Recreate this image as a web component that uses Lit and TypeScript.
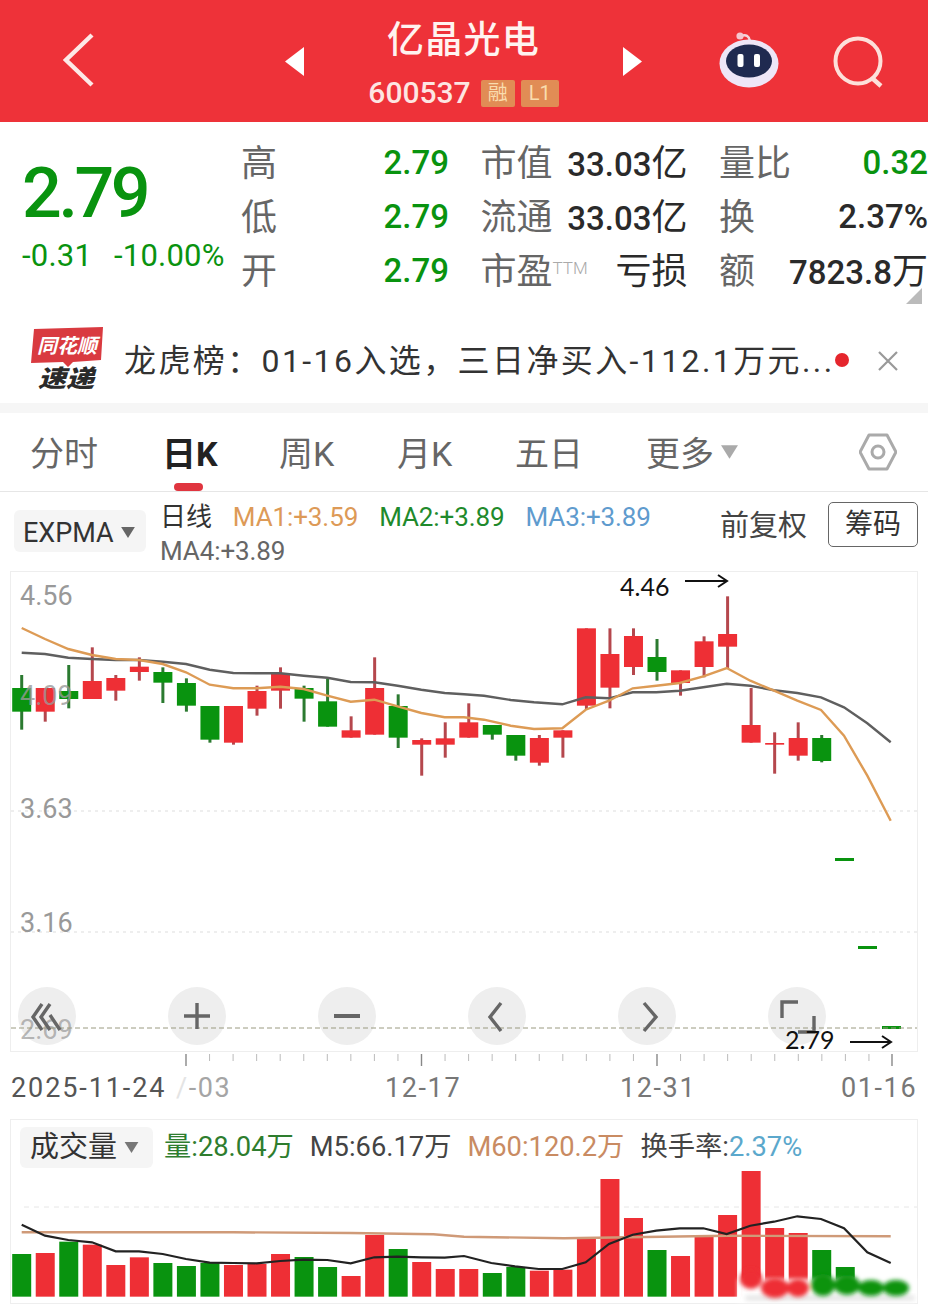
import { LitElement, html, svg, css } from "lit";
import { customElement } from "lit/decorators.js";

const RED = "#ee2f35";
const GREEN = "#09930f";
const slot = (i: number) => 21.7 + 23.53 * i;
const cy = (v: number) => 570 + v / 3;
const vy = (v: number) => 1110 + v / 3;

// [up, wickTop, wickBottom, bodyTop, bodyBottom] measured in 3x crop units
const candles: [number, number, number, number, number][] = [
  [0, 318, 482, 357, 428], [1, 357, 458, 357, 428], [0, 288, 418, 366, 390], [1, 235, 390, 336, 390],
  [1, 318, 395, 327, 365], [1, 265, 335, 293, 309], [0, 295, 402, 309, 341], [0, 328, 428, 342, 410],
  [0, 411, 521, 411, 512], [1, 411, 527, 411, 521], [1, 350, 440, 366, 419], [1, 295, 419, 312, 365],
  [0, 350, 458, 357, 389], [0, 330, 473, 397, 473], [1, 442, 506, 484, 506], [1, 265, 497, 357, 497],
  [0, 376, 537, 411, 506], [1, 508, 620, 513, 527], [1, 460, 566, 508, 527], [1, 403, 506, 460, 506],
  [0, 468, 512, 468, 497], [0, 498, 575, 498, 560], [1, 498, 590, 507, 581], [1, 484, 566, 484, 506],
  [1, 178, 420, 178, 410], [1, 178, 418, 255, 356], [1, 178, 318, 201, 294], [0, 210, 335, 264, 309],
  [1, 304, 380, 304, 342], [1, 202, 325, 217, 294], [1, 82, 300, 195, 233], [1, 357, 521, 468, 521],
  [1, 490, 614, 522, 527], [1, 460, 575, 507, 560], [0, 498, 580, 507, 576],
];

const maOrange: [number, number][] = [
  [65,177],[135,210],[205,240],[276,258],[347,270],[417,273],[488,285],[558,310],[629,347],[700,358],[770,358],[841,353],[911,360],[982,380],[1052,398],[1123,392],[1193,412],[1264,432],[1334,445],
  [1392,445],[1452,452],[1532,470],[1602,480],[1687,478],[1757,422],[1827,395],[1898,358],[1969,350],[2039,342],[2110,322],[2180,297],[2251,335],[2322,365],[2392,395],[2463,423],[2532,500],[2602,620],[2672,755],
];
const maGray: [number, number][] = [
  [65,251],[135,255],[205,266],[276,270],[347,273],[417,273],[488,278],[558,285],[629,302],[700,312],[770,313],[841,313],[911,320],[982,326],[1052,339],[1123,340],[1193,350],[1264,362],[1334,372],
  [1392,376],[1452,380],[1532,393],[1602,400],[1687,406],[1757,385],[1827,388],[1898,370],[1969,370],[2039,365],[2110,355],[2180,344],[2251,350],[2322,364],[2392,372],[2463,385],[2532,415],[2602,463],[2672,520],
];
const volBlack: [number, number][] = [
  [65,347],[135,380],[205,393],[276,400],[347,427],[417,427],[488,435],[558,450],[629,461],[700,462],[770,463],[841,456],[911,452],[982,453],[1052,463],[1123,445],[1193,443],[1264,445],[1334,446],
  [1392,441],[1474,462],[1545,472],[1616,480],[1687,480],[1757,460],[1827,405],[1898,377],[1969,365],[2039,358],[2110,358],[2180,375],[2251,350],[2322,338],[2392,322],[2463,330],[2532,358],[2602,430],[2672,462],
];
const volOrange: [number, number][] = [
  [65,370],[700,370],[1052,372],[1300,376],[1392,383],[1692,388],[2180,380],[2672,382],
];
// [up, top] for the volume bars, in 3x crop units
const bars: [number, number][] = [
  [0,435],[1,432],[0,398],[1,407],[1,468],[1,445],[0,462],[0,471],[0,462],[1,468],[1,465],[1,435],[0,444],[0,474],[1,501],[1,378],[0,420],[1,459],[1,480],
  [1,480],[0,492],[0,474],[1,485],[1,482],[1,385],[1,210],[1,327],[0,423],[1,441],[1,382],[1,318],[1,186],[1,357],[1,372],[0,423],[0,474],
];
const pts = (list: [number, number][], f: (v: number) => number) =>
  list.map(([x, y]) => `${(x / 3).toFixed(1)},${f(y).toFixed(1)}`).join(" ");

const btnX = [47, 197, 347, 497, 647, 797];

@customElement("app-root")
export class AppRoot extends LitElement {
  static styles = css`
    :host { display: block; width: 928px; height: 1312px; overflow: hidden; background: #fff;
      font-family: Roboto, "Noto Sans CJK SC", sans-serif; color: #333; }
    .header { height: 122px; background: #ee3239; display: grid; grid-template-columns: 285px 357px 286px; color: #fff; }
    .back { padding: 33px 0 0 63px; }
    .mid { display: flex; justify-content: space-between; align-items: center; }
    .title { display: flex; flex-direction: column; align-items: center; align-self: flex-start; }
    .name { font-size: 37px; line-height: 44px; margin-top: 19px; letter-spacing: 1.3px; color: #fff3f0; font-weight: 500; }
    .code { display: flex; align-items: center; gap: 6px; margin-top: 15px; font-size: 30px; line-height: 30px; color: #fde6e2; font-weight: 500; }
    .code span.num { margin-right: 4px; }
    .badge { background: #e18c55; color: #f9dcae; font-size: 20px; font-weight: 400; height: 27px; line-height: 27px; width: 34px; text-align: center; border-radius: 2px; }
    .badge.w { width: 38px; }
    .tri { margin-top: 1px; display: block; }
    .tools { display: flex; gap: 53px; padding: 30px 0 0 76px; align-items: flex-start; }
    .search { margin-top: 4px; }
    .stats { height: 197px; padding-top: 13px; box-sizing: border-box; display: flex; position: relative; }
    .price { width: 241px; padding-left: 22px; box-sizing: border-box; color: ${css([GREEN] as any)}; flex: none; }
    .big { font-size: 70px; line-height: 78px; font-weight: 500; letter-spacing: -3.4px; margin-top: 19px; }
    .chg { display: flex; gap: 22px; font-size: 31px; line-height: 32px; margin-top: 8px; letter-spacing: 0.2px; white-space: nowrap; }
    .grid { display: grid; grid-template-columns: 208px 207px 209px; column-gap: 31.5px; grid-auto-rows: 54px; flex: none; margin-top: -2px; }
    .cell { display: flex; justify-content: space-between; align-items: center; font-size: 36px; color: #666; white-space: nowrap; }
    .cell b { font-weight: 500; color: #2a2a2a; font-size: 33px; margin-top: 4px; }
    .cell b.n { margin-top: 0; }
    .cell b i { font-style: normal; font-size: 36px; font-weight: 400; }
    .cell b.g { color: ${css([GREEN] as any)}; }
    .cell sup { font-size: 17px; color: #aaa; vertical-align: 10px; line-height: 0; font-weight: 300; }
    .corner { position: absolute; right: 6px; bottom: 15px; width: 0; height: 0; border-left: 16px solid transparent; border-bottom: 16px solid #bbb; }
    .banner { height: 84px; display: flex; align-items: center; padding-left: 30px; }
    .logo { width: 74px; height: 66px; flex: none; margin-top: -2px; }
    .logo svg { display: block; }
    .logo-a { font-size: 20px; font-weight: 700; font-style: italic; fill: #fff; }
    .logo-b { font-size: 24px; font-weight: 900; font-style: italic; fill: #2a2a2a; }
    .news { font-size: 32px; color: #333; margin-left: 20px; white-space: nowrap; width: 711px; overflow: hidden; line-height: 44px; letter-spacing: 2.4px; flex: none; }
    .dot { width: 14px; height: 14px; background: #e5262d; border-radius: 50%; flex: none; margin-top: -3px; }
    .close { margin-left: 29px; display: block; flex: none; }
    .sep { height: 10px; background: #f6f6f6; }
    .tabs { height: 79px; padding-bottom: 1px; box-sizing: border-box; border-bottom: 1px solid #e6e6e6; display: flex; position: relative; align-items: center; padding-left: 30px; font-size: 34px; color: #666; }
    .tab { white-space: nowrap; }
    .tab.on { color: #222; font-weight: 700; }
    .t1 { width: 132px; } .t2 { width: 117px; } .t3 { width: 118px; } .t4 { width: 118px; } .t5 { width: 131px; }
    .t6 { display: flex; align-items: center; gap: 7px; width: 213px; }
    .underline { position: absolute; left: 174px; bottom: 0; width: 29px; height: 8px; background: #e0353f; border-radius: 4px; }
    .legend { height: 79px; position: relative; }
    .pill { position: absolute; left: 14px; top: 18px; width: 132px; height: 42px; box-sizing: border-box; background: #f5f5f5; border-radius: 6px; display: flex; align-items: center; gap: 7px; padding: 3px 0 0 9px; font-size: 27px; color: #333; }
    .lines { position: absolute; left: 160px; top: 8px; font-size: 26px; line-height: 34px; white-space: nowrap; }
    .lines span { margin-right: 21px; letter-spacing: -0.1px; }
    .fq { position: absolute; left: 720px; top: 16px; font-size: 29px; line-height: 36px; color: #444; }
    .chip { position: absolute; left: 828px; top: 10px; width: 90px; height: 45px; box-sizing: border-box; border: 1px solid #666; border-radius: 5px; text-align: center; line-height: 44px; font-size: 28px; color: #333; }
    .o { color: #dd9a57; } .g2 { color: #1f8a2c; } .b { color: #5f9bce; } .gr { color: #666; }
    .chart { margin-left: 10px; width: 908px; height: 481px; display: block; }
    .axis { font-size: 27px; fill: #999; }
    .note { font-size: 25px; fill: #111; font-family: Lato, sans-serif; }
    .xaxis { display: block; width: 928px; height: 67px; }
    .xlab { font-size: 27px; fill: #777; letter-spacing: 1.6px; }
    .xlab.d { fill: #555; letter-spacing: 1.9px; }
    .xlab.l { fill: #a5a5a5; }
    .slash { fill: #e4e4e4; }
    .vol { margin-left: 10px; width: 908px; height: 185px; border: 1px solid #eee; box-sizing: border-box; position: relative; }
    .plot { display: block; position: absolute; left: -1px; top: -1px; }
    .volhead { position: absolute; left: 9px; top: 7px; display: flex; align-items: center; font-size: 27.3px; line-height: 37px; white-space: nowrap; }
    .vpill { width: 133px; height: 41px; box-sizing: border-box; background: #f5f5f5; border-radius: 6px; display: flex; align-items: center; gap: 7px; padding-left: 10px; font-size: 29px; color: #333; margin-right: 11px; flex: none; }
    .volhead .v { margin-right: 16px; }
    .vg { color: #2e7d2e; } .vd { color: #444; } .vo { color: #c98b62; } .vb { color: #5ba8cc; }
    .caret { display: block; flex: none; }
  `;

  private caret(w: number, h: number, fill = "#777") {
    return html`<svg class="caret" width=${w} height=${h} viewBox="0 0 10 8"><path d="M0 0H10L5 8Z" fill=${fill}/></svg>`;
  }

  private chart() {
    return html`<svg class="chart" viewBox="10 572 908 481">
      <rect x="10.5" y="572.5" width="907" height="480" fill="#fff" stroke="#eee"/>
      <line x1="11" x2="917" y1="812" y2="812" stroke="#ddd" stroke-dasharray="3 4"/>
      <line x1="11" x2="917" y1="933" y2="933" stroke="#ddd" stroke-dasharray="3 4"/>
      ${candles.map(([up, wt, wb, bt, bb], i) => {
        const x = slot(i);
        return svg`<line x1=${x} x2=${x} y1=${cy(wt)} y2=${cy(wb)} stroke=${up ? "#b5474d" : "#2b7a30"} stroke-width="3"/>
          <rect x=${x - 9.5} y=${cy(bt)} width="19" height=${(bb - bt) / 3} fill=${up ? RED : GREEN}/>`;
      })}
      <polyline points=${pts(maGray, cy)} fill="none" stroke="#5f5f5f" stroke-width="2.4"/>
      <polyline points=${pts(maOrange, cy)} fill="none" stroke="#dd9b55" stroke-width="2.4"/>
      <rect x="835" y="859" width="19" height="3" fill=${GREEN}/>
      <rect x="858" y="947" width="19" height="3" fill=${GREEN}/>
      <rect x="882" y="1027" width="19" height="3" fill=${GREEN}/>
      <text class="axis" x="20" y="606">4.56</text>
      <text class="axis" x="20" y="706" fill-opacity="0.8">4.09</text>
      <text class="axis" x="20" y="819">3.63</text>
      <text class="axis" x="20" y="933">3.16</text>
      ${btnX.map((x) => svg`<circle cx=${x} cy="1017" r="29" fill="#eee"/>`)}
      <text class="axis" x="20" y="1040" fill-opacity="0.7">2.69</text>
      <line x1="11" x2="917" y1="1029" y2="1029" stroke="#9a9a80" stroke-dasharray="5 3"/>
      <g fill="none" stroke="#666" stroke-width="3.4">
        <path d="M42 1005L33 1018L42 1031M50 1005L41 1018L50 1031M60 1031L50 1016"/>
        <path d="M184 1017H210M197 1004V1030"/>
        <path d="M334 1017H360" stroke-width="4"/>
        <path d="M501 1004L490 1018L501 1032"/>
        <path d="M644 1004L656 1018L644 1032"/>
        <path d="M782 1019V1003H798M814 1017V1033H798"/>
      </g>
      <text class="note" x="620" y="597">4.46</text>
      <path d="M685 582H727M718 576L727 582L718 588" fill="none" stroke="#111" stroke-width="2"/>
      <text class="note" x="785" y="1050">2.79</text>
      <path d="M850 1043H891M882 1037L891 1043L882 1049" fill="none" stroke="#111" stroke-width="2"/>
    </svg>`;
  }

  private xaxis() {
    const ticks = Array.from({ length: 30 }, (_, i) => 186 + i * 23.55);
    return html`<svg class="xaxis" viewBox="0 1053 928 67">
      ${ticks.map((x, i) => svg`<line x1=${x} x2=${x} y1="1055" y2=${i % 10 === 0 ? 1067 : 1062} stroke=${i % 10 === 0 ? "#888" : "#bbb"} stroke-width=${i % 10 === 0 ? 1.4 : 1}/>`)}
      <line x1="892" x2="892" y1="1055" y2="1067" stroke="#888" stroke-width="1.4"/>
      <text class="xlab l" x="176" y="1098"><tspan class="slash">/</tspan>-03</text>
      <text class="xlab d" x="11" y="1098">2025-11-24</text>
      <text class="xlab" x="385" y="1098">12-17</text>
      <text class="xlab" x="620" y="1098">12-31</text>
      <text class="xlab" x="841" y="1098">01-16</text>
    </svg>`;
  }

  private volume() {
    const blobsR = [[751, 1280, 11, 10], [775, 1289, 14, 10], [798, 1289, 11, 9]];
    const blobsG = [[823, 1286, 12, 11], [847, 1286, 13, 10], [871, 1289, 13, 8], [896, 1289, 13, 8]];
    return html`<div class="vol">
      <svg class="plot" width="908" height="185" viewBox="10 1120 908 185">
        <defs><filter id="blur" x="-30%" y="-30%" width="160%" height="160%"><feGaussianBlur stdDeviation="2"/></filter></defs>
        <line x1="24" x2="917" y1="1208" y2="1208" stroke="#e6e6e6" stroke-dasharray="5 5"/>
        ${bars.map(([up, t], i) => svg`<rect x=${slot(i) - 9.5} y=${vy(t)} width="19" height=${(563 - t) / 3} fill=${up ? RED : GREEN}/>`)}
        <polyline points=${pts(volOrange, vy)} fill="none" stroke="#cf9a78" stroke-width="2.4"/>
        <polyline points=${pts(volBlack, vy)} fill="none" stroke="#222" stroke-width="2.2"/>
        <rect x="738" y="1280" width="178" height="23" fill="#fff" filter="url(#blur)"/>
        <rect x="745" y="1296" width="170" height="6" rx="3" fill="#e8e8e8" filter="url(#blur)"/>
        <g filter="url(#blur)">
          ${blobsR.map(([x, y, rx, ry]) => svg`<ellipse cx=${x} cy=${y} rx=${rx} ry=${ry} fill=${RED}/>`)}
          ${blobsG.map(([x, y, rx, ry]) => svg`<ellipse cx=${x} cy=${y} rx=${rx} ry=${ry} fill=${GREEN}/>`)}
        </g>
      </svg>
      <div class="volhead">
        <div class="vpill">成交量${this.caret(15, 11)}</div>
        <span class="v vg">量:28.04万</span>
        <span class="v vd">M5:66.17万</span>
        <span class="v vo">M60:120.2万</span>
        <span class="vd">换手率:</span><span class="vb">2.37%</span>
      </div>
    </div>`;
  }

  render() {
    return html`
      <div class="header">
        <div class="back">
          <svg width="32" height="54" viewBox="0 0 32 54"><path d="M29 2L3 27L29 52" fill="none" stroke="#fde9e6" stroke-width="4.4"/></svg>
        </div>
        <div class="mid">
          <svg class="tri" width="19" height="29" viewBox="0 0 19 29"><path d="M19 0V29L0 14.5Z" fill="#fff"/></svg>
          <div class="title">
            <div class="name">亿晶光电</div>
            <div class="code"><span class="num">600537</span><span class="badge">融</span><span class="badge w">L1</span></div>
          </div>
          <svg class="tri" width="19" height="29" viewBox="0 0 19 29"><path d="M0 0V29L19 14.5Z" fill="#fff"/></svg>
        </div>
        <div class="tools">
          <svg width="62" height="60" viewBox="0 0 62 60">
            <path d="M23 6C28 4 31 6 32 11" fill="none" stroke="#f3d5dc" stroke-width="2.4"/>
            <circle cx="22" cy="6" r="3.6" fill="#f5c6cf"/>
            <ellipse cx="31" cy="33.5" rx="29.5" ry="24" fill="#eee6f7"/>
            <ellipse cx="31" cy="31" rx="23" ry="16.5" fill="#1f2a50"/>
            <rect x="19.5" y="24" width="6" height="13" rx="2" fill="#fff"/>
            <rect x="36" y="24" width="6" height="13" rx="2" fill="#fff"/>
          </svg>
          <svg class="search" width="52" height="58" viewBox="0 0 52 58">
            <circle cx="25" cy="27" r="22.5" fill="none" stroke="#fde0da" stroke-width="4"/>
            <path d="M39 44L48 52" stroke="#fde0da" stroke-width="4.4" fill="none"/>
          </svg>
        </div>
      </div>
      <div class="stats">
        <div class="price">
          <div class="big">2.79</div>
          <div class="chg"><span>-0.31</span><span>-10.00%</span></div>
        </div>
        <div class="grid">
          <div class="cell">高<b class="g">2.79</b></div>
          <div class="cell">市值<b class="n">33.03<i>亿</i></b></div>
          <div class="cell">量比<b class="g">0.32</b></div>
          <div class="cell">低<b class="g">2.79</b></div>
          <div class="cell">流通<b class="n">33.03<i>亿</i></b></div>
          <div class="cell">换<b>2.37%</b></div>
          <div class="cell">开<b class="g">2.79</b></div>
          <div class="cell"><span>市盈<sup>TTM</sup></span><b class="n"><i>亏损</i></b></div>
          <div class="cell">额<b class="n">7823.8<i>万</i></b></div>
        </div>
        <div class="corner"></div>
      </div>
      <div class="banner">
        <div class="logo">
          <svg width="74" height="66" viewBox="0 0 74 66">
            <path d="M4 2L73 0L71 33L43 35L38 40L33 35L1 36Z" fill="#d93a40"/>
            <text class="logo-a" x="7" y="26" textLength="60" lengthAdjust="spacingAndGlyphs">同花顺</text>
            <text class="logo-b" x="8" y="60" textLength="56" lengthAdjust="spacingAndGlyphs">速递</text>
          </svg>
        </div>
        <div class="news">龙虎榜：01-16入选，三日净买入-112.1万元...</div>
        <div class="dot"></div>
        <svg class="close" width="20" height="20" viewBox="0 0 20 20"><path d="M1 1L19 19M19 1L1 19" stroke="#999" stroke-width="2.2"/></svg>
      </div>
      <div class="sep"></div>
      <div class="tabs">
        <div class="tab t1">分时</div>
        <div class="tab t2 on">日K</div>
        <div class="tab t3">周K</div>
        <div class="tab t4">月K</div>
        <div class="tab t5">五日</div>
        <div class="tab t6">更多${this.caret(17, 14, "#aaa")}</div>
        <svg width="38" height="38" viewBox="0 0 38 38"><path d="M10 2H28L37 19L28 36H10L1 19Z" fill="none" stroke="#aaa" stroke-width="3" stroke-linejoin="round"/><circle cx="19" cy="19" r="6" fill="none" stroke="#aaa" stroke-width="3"/></svg>
        <div class="underline"></div>
      </div>
      <div class="legend">
        <div class="pill">EXPMA${this.caret(14, 11, "#666")}</div>
        <div class="lines">
          <div><span>日线</span><span class="o">MA1:+3.59</span><span class="g2">MA2:+3.89</span><span class="b">MA3:+3.89</span></div>
          <div><span class="gr">MA4:+3.89</span></div>
        </div>
        <div class="fq">前复权</div>
        <div class="chip">筹码</div>
      </div>
      ${this.chart()}
      ${this.xaxis()}
      ${this.volume()}
    `;
  }
}
